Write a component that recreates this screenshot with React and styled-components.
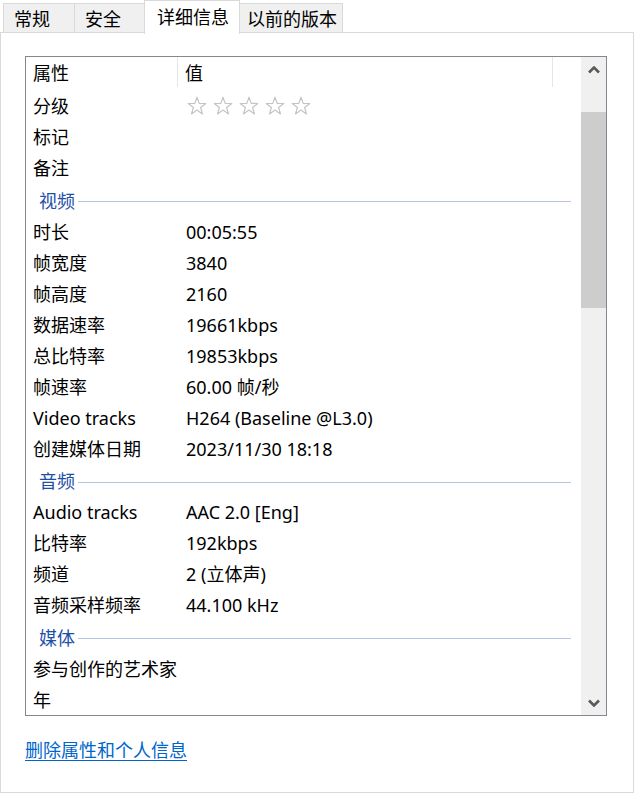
import React from "react"
import styled, { createGlobalStyle } from "styled-components"

const GlobalStyle = createGlobalStyle`
  html, body {
    margin: 0;
    padding: 0;
    background: #ffffff;
  }
  body {
    font-family: "Noto Sans", "Noto Sans CJK SC", sans-serif;
    color: #000;
  }
`

const Window = styled.div`
  width: 636px;
  height: 795px;
  background: #ffffff;
  overflow: hidden;
`

const TabBar = styled.div`
  display: flex;
  align-items: flex-end;
  height: 33px;
  padding-left: 3px;
  position: relative;
  z-index: 2;
`

const Tab = styled.div`
  box-sizing: border-box;
  width: ${p => p.$w}px;
  height: ${p => (p.$active ? 34 : 30)}px;
  margin-left: -1px;
  margin-bottom: ${p => (p.$active ? -1 : 0)}px;
  border: 1px solid #d9d9d9;
  border-bottom: ${p => (p.$active ? "none" : "1px solid #d9d9d9")};
  background: ${p => (p.$active ? "#ffffff" : "#f0f0f0")};
  font-size: 18px;
  line-height: ${p => (p.$active ? 33 : 30)}px;
  padding-left: ${p => p.$pad}px;
  white-space: nowrap;
  &:first-child {
    margin-left: 0;
  }
`

const Panel = styled.div`
  box-sizing: border-box;
  width: 634px;
  height: 761px;
  margin-top: -1px;
  border: 1px solid #d9d9d9;
  padding: 23px 0 0 24px;
`

const List = styled.div`
  box-sizing: border-box;
  width: 582px;
  height: 660px;
  border: 1px solid #828790;
  display: flex;
  background: #fff;
`

const Content = styled.div`
  flex: 1;
  overflow: hidden;
`

const HeaderRow = styled.div`
  display: flex;
  height: 33px;
  font-size: 18px;
`

const HeaderCell = styled.div`
  box-sizing: border-box;
  width: ${p => (p.$w ? p.$w + "px" : "auto")};
  flex: ${p => (p.$w ? "none" : "1")};
  padding-left: ${p => p.$pad}px;
  line-height: 33px;
  border-right: ${p => (p.$divider ? "1px solid #e5e5e5" : "none")};
  height: 30px;
`

const Row = styled.div`
  display: grid;
  grid-template-columns: 152px 1fr;
  height: 31px;
  align-items: center;
  font-size: 18px;
  line-height: 30px;
`

const Label = styled.div`
  padding-left: 7px;
  white-space: nowrap;
`

const Value = styled.div`
  padding-left: 8px;
  white-space: nowrap;
  display: flex;
  align-items: center;
`

const Section = styled.div`
  display: flex;
  align-items: center;
  height: ${p => p.$h}px;
  padding-left: 13px;
  padding-right: 10px;
  font-size: 18px;
  color: #1e4fa8;
`

const SectionLine = styled.div`
  flex: 1;
  height: 1px;
  background: #b6c3e2;
  margin-left: 3px;
  margin-top: 4px;
`

const Stars = styled.div`
  display: flex;
  gap: 6px;
  margin-left: 1px;
`

const Scrollbar = styled.div`
  width: 25px;
  background: #f0f0f0;
  display: flex;
  flex-direction: column;
`

const ArrowButton = styled.div`
  height: 25px;
  display: flex;
  align-items: center;
  justify-content: center;
`

const Track = styled.div`
  flex: 1;
`

const Thumb = styled.div`
  margin-top: 30px;
  height: 196px;
  background: #cdcdcd;
`

const Link = styled.a`
  display: inline-block;
  margin-top: 22px;
  font-size: 18px;
  line-height: 24px;
  color: #0066cc;
  text-decoration: underline;
  text-underline-offset: 3px;
  cursor: pointer;
`

const Star = () => (
  <svg width="20" height="20" viewBox="0 0 20 20">
    <polygon
      points="10,1.2 12.2,7.4 18.8,7.5 13.6,11.5 15.5,17.9 10,14.1 4.5,17.9 6.4,11.5 1.2,7.5 7.8,7.4"
      fill="none"
      stroke="#c4c4c4"
      strokeWidth="1.2"
      strokeLinejoin="round"
    />
  </svg>
)

const Chevron = ({ down }) => (
  <svg width="12" height="8" viewBox="0 0 12 8">
    <polyline
      points={down ? "1,1.5 6,6.5 11,1.5" : "1,6.5 6,1.5 11,6.5"}
      fill="none"
      stroke="#5a5a5a"
      strokeWidth="2.6"
    />
  </svg>
)

const tabs = [
  { name: "常规", w: 72, pad: 10 },
  { name: "安全", w: 71, pad: 10 },
  { name: "详细信息", w: 96, pad: 12, active: true },
  { name: "以前的版本", w: 104, pad: 7 },
]

const items = [
  { label: "分级", stars: true },
  { label: "标记" },
  { label: "备注" },
  { section: "视频", h: 33 },
  { label: "时长", value: "00:05:55" },
  { label: "帧宽度", value: "3840" },
  { label: "帧高度", value: "2160" },
  { label: "数据速率", value: "19661kbps" },
  { label: "总比特率", value: "19853kbps" },
  { label: "帧速率", value: "60.00 帧/秒" },
  { label: "Video tracks", value: "H264 (Baseline @L3.0)" },
  { label: "创建媒体日期", value: "2023/11/30 18:18" },
  { section: "音频", h: 32 },
  { label: "Audio tracks", value: "AAC 2.0 [Eng]" },
  { label: "比特率", value: "192kbps" },
  { label: "频道", value: "2 (立体声)" },
  { label: "音频采样频率", value: "44.100 kHz" },
  { section: "媒体", h: 33 },
  { label: "参与创作的艺术家" },
  { label: "年" },
]

const App = () => {
  return (
    <Window>
      <GlobalStyle />
      <TabBar>
        {tabs.map(t => (
          <Tab key={t.name} $w={t.w} $pad={t.pad} $active={t.active}>
            {t.name}
          </Tab>
        ))}
      </TabBar>
      <Panel>
        <List>
          <Content>
            <HeaderRow>
              <HeaderCell $w={152} $pad={7} $divider>属性</HeaderCell>
              <HeaderCell $w={375} $pad={7} $divider>值</HeaderCell>
              <HeaderCell $pad={0} />
            </HeaderRow>
            {items.map((it, i) =>
              it.section ? (
                <Section key={i} $h={it.h}>
                  {it.section}
                  <SectionLine />
                </Section>
              ) : (
                <Row key={i}>
                  <Label>{it.label}</Label>
                  <Value>
                    {it.stars ? (
                      <Stars>
                        {[0, 1, 2, 3, 4].map(s => (
                          <Star key={s} />
                        ))}
                      </Stars>
                    ) : (
                      it.value
                    )}
                  </Value>
                </Row>
              )
            )}
          </Content>
          <Scrollbar>
            <ArrowButton>
              <Chevron />
            </ArrowButton>
            <Track>
              <Thumb />
            </Track>
            <ArrowButton>
              <Chevron down />
            </ArrowButton>
          </Scrollbar>
        </List>
        <Link>删除属性和个人信息</Link>
      </Panel>
    </Window>
  )
}

export default App
